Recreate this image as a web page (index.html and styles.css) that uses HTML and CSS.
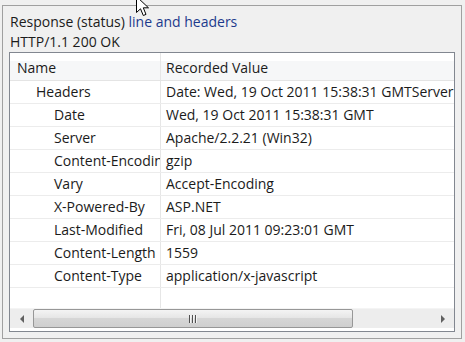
FILE: index.html
```html
<!DOCTYPE html>
<html lang="en">

<head>
    <meta charset="UTF-8">
    <title>Response headers</title>
    <link rel="stylesheet" href="styles.css">
</head>

<body>
    <div class="group">
        <div class="caption">Response (status) <span class="hot">line and headers</span></div>
        <div class="caption">HTTP/1.1 200 OK</div>

        <div class="list">
            <div class="row head">
                <div class="cell name">Name</div>
                <div class="cell value">Recorded Value</div>
            </div>
            <div class="row">
                <div class="cell name level1">Headers</div>
                <div class="cell value">Date: Wed, 19 Oct 2011 15:38:31 GMTServer: Apache/2.2.21 (Win32)Content-Encoding: gzip</div>
            </div>
            <div class="row">
                <div class="cell name level2">Date</div>
                <div class="cell value">Wed, 19 Oct 2011 15:38:31 GMT</div>
            </div>
            <div class="row">
                <div class="cell name level2">Server</div>
                <div class="cell value">Apache/2.2.21 (Win32)</div>
            </div>
            <div class="row">
                <div class="cell name level2">Content-Encoding</div>
                <div class="cell value">gzip</div>
            </div>
            <div class="row">
                <div class="cell name level2">Vary</div>
                <div class="cell value">Accept-Encoding</div>
            </div>
            <div class="row">
                <div class="cell name level2">X-Powered-By</div>
                <div class="cell value">ASP.NET</div>
            </div>
            <div class="row">
                <div class="cell name level2">Last-Modified</div>
                <div class="cell value">Fri, 08 Jul 2011 09:23:01 GMT</div>
            </div>
            <div class="row">
                <div class="cell name level2">Content-Length</div>
                <div class="cell value">1559</div>
            </div>
            <div class="row">
                <div class="cell name level2">Content-Type</div>
                <div class="cell value">application/x-javascript</div>
            </div>
            <div class="row filler">
                <div class="cell name"></div>
                <div class="cell value"></div>
            </div>

            <div class="hscroll">
                <div class="arrow-btn"><span class="tri left"></span></div>
                <div class="track">
                    <div class="thumb"><span class="grip"></span></div>
                </div>
                <div class="arrow-btn"><span class="tri right"></span></div>
            </div>
        </div>
    </div>

    <!-- mouse pointer caught in the screenshot -->
    <svg class="pointer" width="16" height="22" viewBox="0 0 16 22">
        <path d="M0.5 0.5 L0.5 16.5 L4.5 12.8 L7.3 19.5 L10 18.4 L7.3 11.8 L12.5 11.8 Z" fill="#fff" stroke="#000" stroke-width="1" stroke-linejoin="miter"/>
    </svg>
</body>

</html>
```

FILE: styles.css
```css
body {
    margin: 0;
    background-color: #f0f0f0;
    font-family: 'Open Sans', 'Noto Sans', sans-serif;
    font-size: 14px;
    color: #1b1b1b;
    position: relative;
    height: 342px;
    overflow: hidden;
}

.group {
    margin: 5px 0 0 2px;
    width: 458px;
    height: 332px;
    border: 1px solid #a0a0a0;
    padding: 6px 6px 0 6px;
    box-sizing: border-box;
    width: 460px;
    height: 334px;
}

.caption {
    height: 20px;
    line-height: 20px;
    padding-left: 1px;
    white-space: nowrap;
}

.hot {
    color: #1c3a8c;
}

.list {
    border: 1px solid #828790;
    background-color: #fff;
    height: 280px;
    box-sizing: border-box;
    display: flex;
    flex-direction: column;
}

.row {
    display: flex;
    height: 22px;
    border-bottom: 1px solid #ececec;
    flex-shrink: 0;
}

.row.head {
    height: 27px;
    border-bottom-color: #e4e4e4;
    background: linear-gradient(#fff 0, #fff 30%, #f6f7f8 30%, #f6f7f8 100%);
}

.row.filler {
    height: 20px;
    border-bottom: none;
}

.cell {
    line-height: 22px;
    white-space: nowrap;
    overflow: hidden;
}

.head .cell {
    line-height: 29px;
}

.name {
    width: 150px;
    flex-shrink: 0;
    border-right: 1px solid #e6e6e6;
    padding-left: 7px;
    box-sizing: content-box;
    width: 143px;
}

.name.level1 {
    padding-left: 26px;
    width: 124px;
}

.name.level2 {
    padding-left: 44px;
    width: 106px;
}

.value {
    flex: 1;
    padding-left: 5px;
}

/* horizontal scrollbar */
.hscroll {
    display: flex;
    height: 20px;
    margin-bottom: 3px;
    background-color: #ededed;
    border-top: 1px solid #f4f4f4;
    box-sizing: border-box;
}

.arrow-btn {
    width: 23px;
    display: flex;
    align-items: center;
    justify-content: center;
}

.tri {
    width: 0;
    height: 0;
    border-top: 4px solid transparent;
    border-bottom: 4px solid transparent;
}

.tri.left {
    border-right: 4px solid #606060;
}

.tri.right {
    border-left: 4px solid #606060;
}

.track {
    flex: 1;
    display: flex;
}

.thumb {
    width: 318px;
    border: 1px solid #979797;
    border-radius: 2px;
    background: linear-gradient(#f4f4f4, #e6e6e6 45%, #d6d6d6 50%, #cfcfcf);
    display: flex;
    align-items: center;
    justify-content: center;
}

.grip {
    width: 9px;
    height: 8px;
    background: repeating-linear-gradient(90deg, #505050 0, #505050 1px, #f4f4f4 1px, #f4f4f4 2px, transparent 2px, transparent 3px);
}

.pointer {
    position: absolute;
    left: 136px;
    top: -4px;
}
```
